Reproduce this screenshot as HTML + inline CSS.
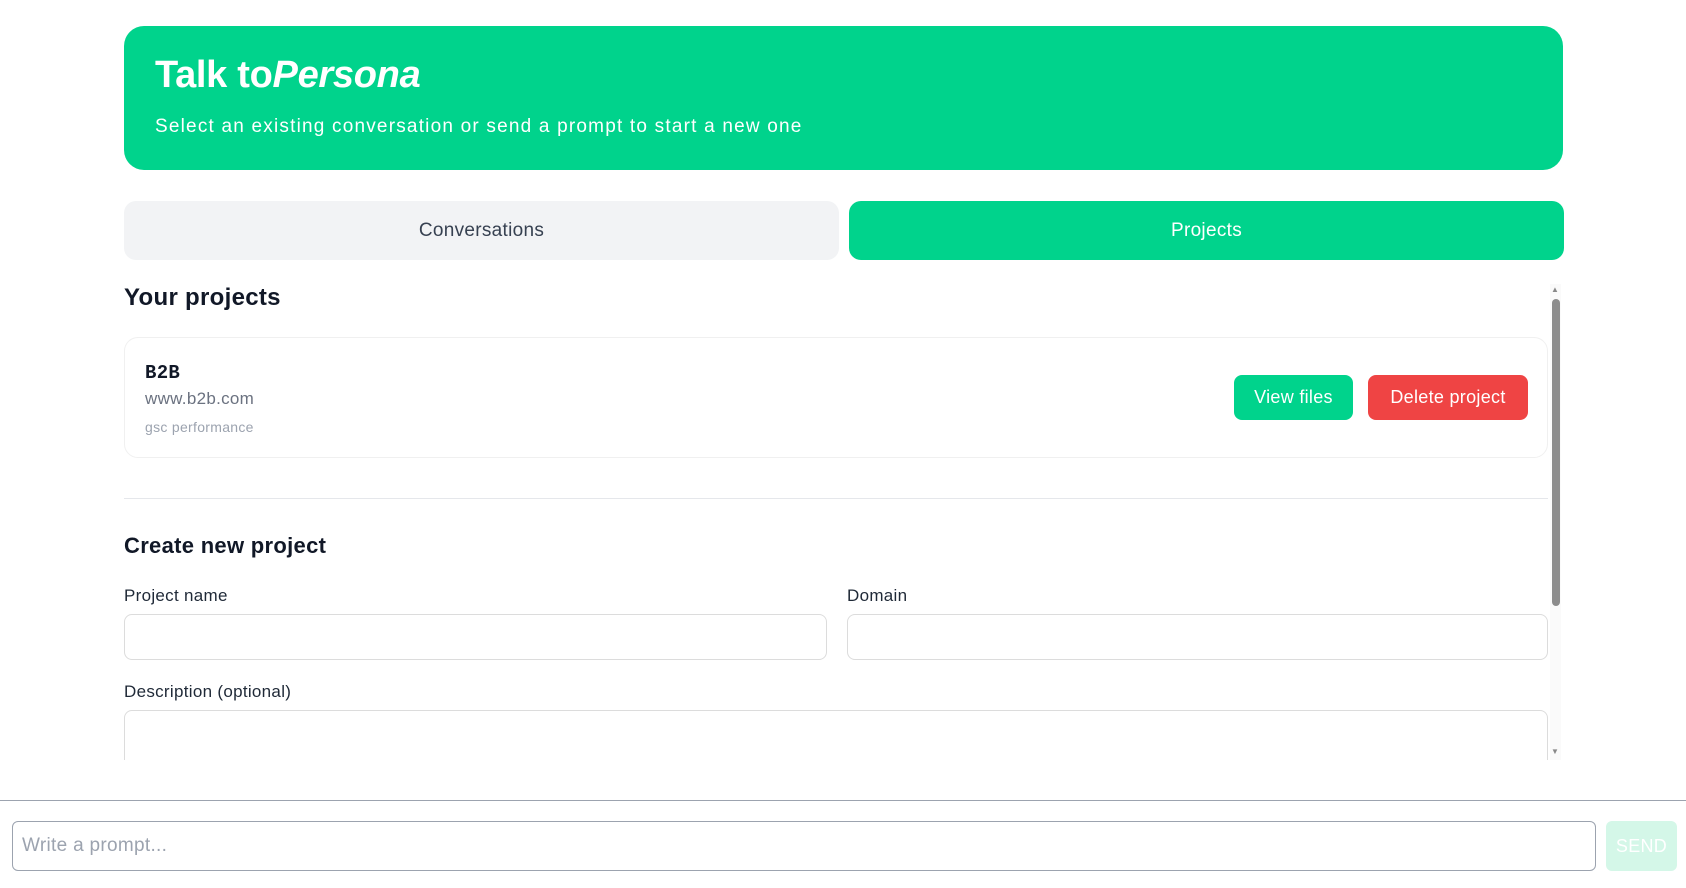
<!DOCTYPE html>
<html><head><meta charset="utf-8"><style>
*{box-sizing:border-box;margin:0;padding:0}
body{width:1686px;height:888px;background:#fff;font-family:"Liberation Sans",sans-serif;position:relative;overflow:hidden;color:#111827;letter-spacing:0.3px}
.abs{position:absolute}
.hero{left:124px;top:26px;width:1439px;height:144px;background:#00d38c;border-radius:20px;color:#fff}
.hero h1{position:absolute;left:31px;top:28px;font-size:38px;font-weight:bold;letter-spacing:-0.3px}
.hero p{position:absolute;left:31px;top:90px;font-size:19px;letter-spacing:1.2px}
.tab{top:201px;height:59px;width:715px;border-radius:12px;display:flex;align-items:center;justify-content:center;font-size:19px}
.card{left:124px;top:337px;width:1424px;height:121px;border:1px solid #f0f0f0;border-radius:14px}
.btn{top:375px;height:45px;border-radius:8px;color:#fff;font-size:18px;display:flex;align-items:center;justify-content:center}
.inp{border:1px solid #dcdcdc;border-radius:8px;background:#fff}
.lbl{font-size:17px;color:#1f2937}
</style></head><body>
<div class="abs hero"><h1>Talk to<i>Persona</i></h1><p>Select an existing conversation or send a prompt to start a new one</p></div>
<div class="abs tab" style="left:124px;background:#f2f3f5;color:#374151">Conversations</div>
<div class="abs tab" style="left:849px;background:#00d38c;color:#fff">Projects</div>
<div class="abs" style="left:124px;top:284px;font-size:24px;font-weight:bold">Your projects</div>
<div class="abs card"></div>
<div class="abs" style="left:145px;top:362px;font-family:'Liberation Mono',monospace;font-weight:bold;font-size:19px">B2B</div>
<div class="abs" style="left:145px;top:389px;font-size:17px;color:#6b7280">www.b2b.com</div>
<div class="abs" style="left:145px;top:419px;font-size:14px;color:#9ca3af">gsc performance</div>
<div class="abs btn" style="left:1234px;width:119px;background:#00d38c">View files</div>
<div class="abs btn" style="left:1368px;width:160px;background:#ef4444">Delete project</div>
<div class="abs" style="left:124px;top:498px;width:1424px;height:1px;background:#e5e7eb"></div>
<div class="abs" style="left:124px;top:533px;font-size:22px;font-weight:bold">Create new project</div>
<div class="abs lbl" style="left:124px;top:586px">Project name</div>
<div class="abs lbl" style="left:847px;top:586px">Domain</div>
<div class="abs inp" style="left:124px;top:614px;width:703px;height:46px"></div>
<div class="abs inp" style="left:847px;top:614px;width:701px;height:46px"></div>
<div class="abs lbl" style="left:124px;top:682px">Description (optional)</div>
<div class="abs" style="left:124px;top:710px;width:1424px;height:50px;overflow:hidden"><div class="inp" style="height:90px"></div></div>
<div class="abs" style="left:1550px;top:284px;width:11px;height:476px;background:#fafafa"></div>
<div class="abs" style="left:1552px;top:299px;width:8px;height:307px;background:#8c8c8c;border-radius:4px"></div>
<div class="abs" style="left:1551px;top:285px;font-size:8px;color:#888">▲</div>
<div class="abs" style="left:1551px;top:747px;font-size:8px;color:#888">▼</div>
<div class="abs" style="left:0;top:800px;width:1686px;height:1px;background:#9ca3af"></div>
<div class="abs" style="left:12px;top:821px;width:1584px;height:50px;border:1px solid #9ca3af;border-radius:6px"></div>
<div class="abs" style="left:22px;top:835px;font-size:19px;color:#9ca3af">Write a prompt...</div>
<div class="abs" style="left:1606px;top:821px;width:71px;height:50px;background:#d4f7e8;border-radius:6px;color:#fff;font-size:18px;display:flex;align-items:center;justify-content:center">SEND</div>
</body></html>
